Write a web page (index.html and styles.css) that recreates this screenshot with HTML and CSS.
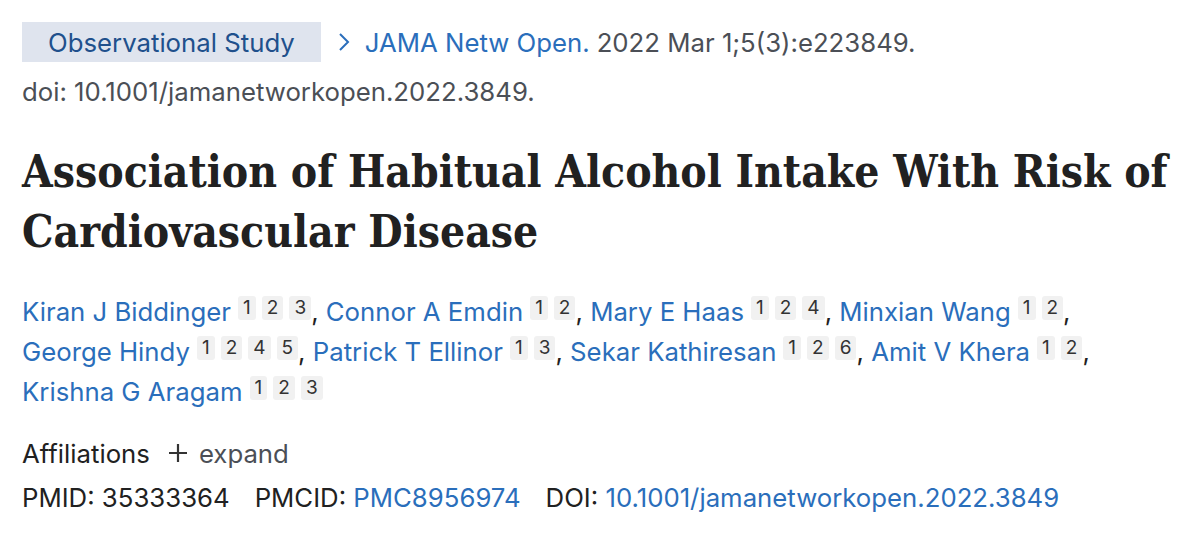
FILE: index.html
```html
<!DOCTYPE html>
<html>
<head>
<meta charset="utf-8">
<link rel="stylesheet" href="styles.css">
</head>
<body>
<main class="page">
  <div class="citation">
    <div class="cit-line">
      <span class="badge">Observational Study</span>
      <a class="journal" href="#"><svg class="chev" viewBox="0 0 12 20" width="12" height="20"><path d="M2 2 L10 10 L2 18" fill="none" stroke="currentColor" stroke-width="2"/></svg>JAMA Netw Open.</a>
      <span class="date">2022 Mar 1;5(3):e223849.</span>
    </div>
    <div class="doi-line">doi: 10.1001/jamanetworkopen.2022.3849.</div>
  </div>
  <h1 class="title">Association of Habitual Alcohol Intake With Risk of Cardiovascular Disease</h1>
  <div class="authors">
    <span class="author"><a href="#">Kiran J Biddinger</a><sup class="refs"><span>1</span><span>2</span><span>3</span></sup>,</span>
    <span class="author"><a href="#">Connor A Emdin</a><sup class="refs"><span>1</span><span>2</span></sup>,</span>
    <span class="author"><a href="#">Mary E Haas</a><sup class="refs"><span>1</span><span>2</span><span>4</span></sup>,</span>
    <span class="author"><a href="#">Minxian Wang</a><sup class="refs"><span>1</span><span>2</span></sup>,</span>
    <span class="author"><a href="#">George Hindy</a><sup class="refs"><span>1</span><span>2</span><span>4</span><span>5</span></sup>,</span>
    <span class="author"><a href="#">Patrick T Ellinor</a><sup class="refs"><span>1</span><span>3</span></sup>,</span>
    <span class="author"><a href="#">Sekar Kathiresan</a><sup class="refs"><span>1</span><span>2</span><span>6</span></sup>,</span>
    <span class="author"><a href="#">Amit V Khera</a><sup class="refs"><span>1</span><span>2</span></sup>,</span>
    <span class="author"><a href="#">Krishna G Aragam</a><sup class="refs"><span>1</span><span>2</span><span>3</span></sup></span>
  </div>
  <div class="affiliations">
    <span class="aff-label">Affiliations</span>
    <span class="expand"><svg class="plus" viewBox="0 0 20 20" width="20" height="20"><path d="M10 1 V19 M1 10 H19" stroke="currentColor" stroke-width="2.2"/></svg>expand</span>
  </div>
  <div class="ids">
    <span class="id">PMID: 35333364</span>
    <span class="id">PMCID: <a href="#">PMC8956974</a></span>
    <span class="id">DOI: <a href="#">10.1001/jamanetworkopen.2022.3849</a></span>
  </div>
</main>
</body>
</html>
```
FILE: styles.css
```css
* { box-sizing: border-box; }
body {
  margin: 0;
  background: #fff;
  font-family: Inter, "Noto Sans", sans-serif;
  font-size: 25.75px;
  color: #212121;
}
a { text-decoration: none; color: #2a6ebb; }
.page {
  padding: 22px 18px 0 22px;
}
.cit-line {
  display: flex;
  align-items: center;
  height: 40px;
  white-space: nowrap;
}
.badge {
  display: inline-flex;
  align-items: center;
  height: 40px;
  padding: 0 26px;
  background: #dfe4ee;
  color: #20508c;
  margin-right: 17px;
}
.journal {
  display: inline-flex;
  align-items: center;
  color: #2a6ebb;
}
.chev {
  margin-right: 15px;
}
.date {
  color: #4b4f56;
  margin-left: 7px;
}
.doi-line {
  color: #4b4f56;
  line-height: 40px;
  margin-top: 10px;
}
.title {
  font-family: "DejaVu Serif Condensed", "DejaVu Serif", serif;
  font-weight: bold;
  font-size: 44px;
  line-height: 60px;
  margin: 30px 0 30px 0;
  color: #212121;
}
.authors {
  line-height: 40px;
  color: #212121;
}
.author {
  white-space: nowrap;
}
.refs {
  display: inline-flex;
  gap: 6px;
  vertical-align: 7px;
  margin-left: 7px;
  font-size: 19px;
  line-height: 24px;
}
.refs span {
  background: #f1f1f1;
  color: #333;
  padding: 0 5px;
  border-radius: 3px;
}
.affiliations {
  display: flex;
  align-items: center;
  height: 40px;
  margin-top: 21px;
}
.expand {
  display: inline-flex;
  align-items: center;
  color: #4b4f56;
  margin-left: 18px;
}
.plus { margin-right: 11px; color: #333; }
.ids {
  display: flex;
  gap: 25px;
  height: 40px;
  align-items: center;
  margin-top: 4px;
}
```
